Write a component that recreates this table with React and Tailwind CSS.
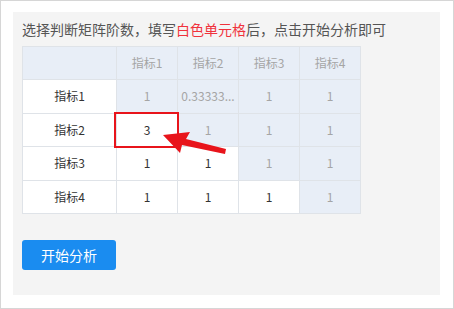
const cols = ['指标1', '指标2', '指标3', '指标4']

// matrix values, upper triangle incl. diagonal is read-only
const matrix = [
  ['1', '0.33333...', '1', '1'],
  ['3', '1', '1', '1'],
  ['1', '1', '1', '1'],
  ['1', '1', '1', '1'],
]

export default function App() {
  return (
    <div
      className="w-[454px] h-[309px] border border-[#d6d6d6] bg-white"
      style={{ fontFamily: '"Noto Sans CJK SC", "Noto Sans", sans-serif' }}
    >
      <div className="ml-[12px] mt-[11px] w-[427px] h-[283px] bg-[#f4f4f4] pl-[9px] pt-[7px]">
        {/* Hint */}
        <p className="text-[14px] leading-[20px] text-[#555]">
          选择判断矩阵阶数，填写<span className="text-[#f0323c]">白色单元格</span>后，点击开始分析即可
        </p>

        {/* Matrix */}
        <div className="relative mt-[7px] w-[339px]">
          <table className="table-fixed border-collapse text-[12px]">
            <colgroup>
              <col className="w-[94px]" />
              <col className="w-[61px]" />
              <col className="w-[61px]" />
              <col className="w-[61px]" />
              <col className="w-[61px]" />
            </colgroup>
            <thead>
              <tr className="h-[33px] bg-[#e8eef7]">
                <th className="border border-[#dfe3e8]" />
                {cols.map((c) => (
                  <th key={c} className="border border-[#dfe3e8] font-normal text-[#a5a5a5]">
                    {c}
                  </th>
                ))}
              </tr>
            </thead>
            <tbody>
              {matrix.map((row, i) => (
                <tr key={i} className="h-[33.5px]">
                  <td className="border border-[#dfe3e8] bg-white text-center text-[#333]">
                    {cols[i]}
                  </td>
                  {row.map((v, j) =>
                    j >= i ? (
                      <td
                        key={j}
                        className="border border-[#dfe3e8] bg-[#e8eef7] text-center text-[#a5a5a5] truncate px-[2px]"
                      >
                        {v}
                      </td>
                    ) : (
                      <td key={j} className="border border-[#dfe3e8] bg-white text-center text-[#333]">
                        {v}
                      </td>
                    )
                  )}
                </tr>
              ))}
            </tbody>
          </table>

          {/* Highlight on editable cell */}
          <div className="absolute left-[92px] top-[66px] w-[65px] h-[36px] border-2 border-[#e8141b]" />

          {/* Pointer arrow */}
          <svg className="absolute left-0 top-0 pointer-events-none" width="339" height="170" viewBox="0 0 339 170">
            <polygon
              points="141,89 168,86 164,93 204,103 203,108 160,99 158,107"
              fill="#e8141b"
            />
          </svg>
        </div>

        <button className="mt-[26px] w-[94px] h-[30px] rounded-[3px] bg-[#1a8cf0] text-[14px] text-white">
          开始分析
        </button>
      </div>
    </div>
  )
}
